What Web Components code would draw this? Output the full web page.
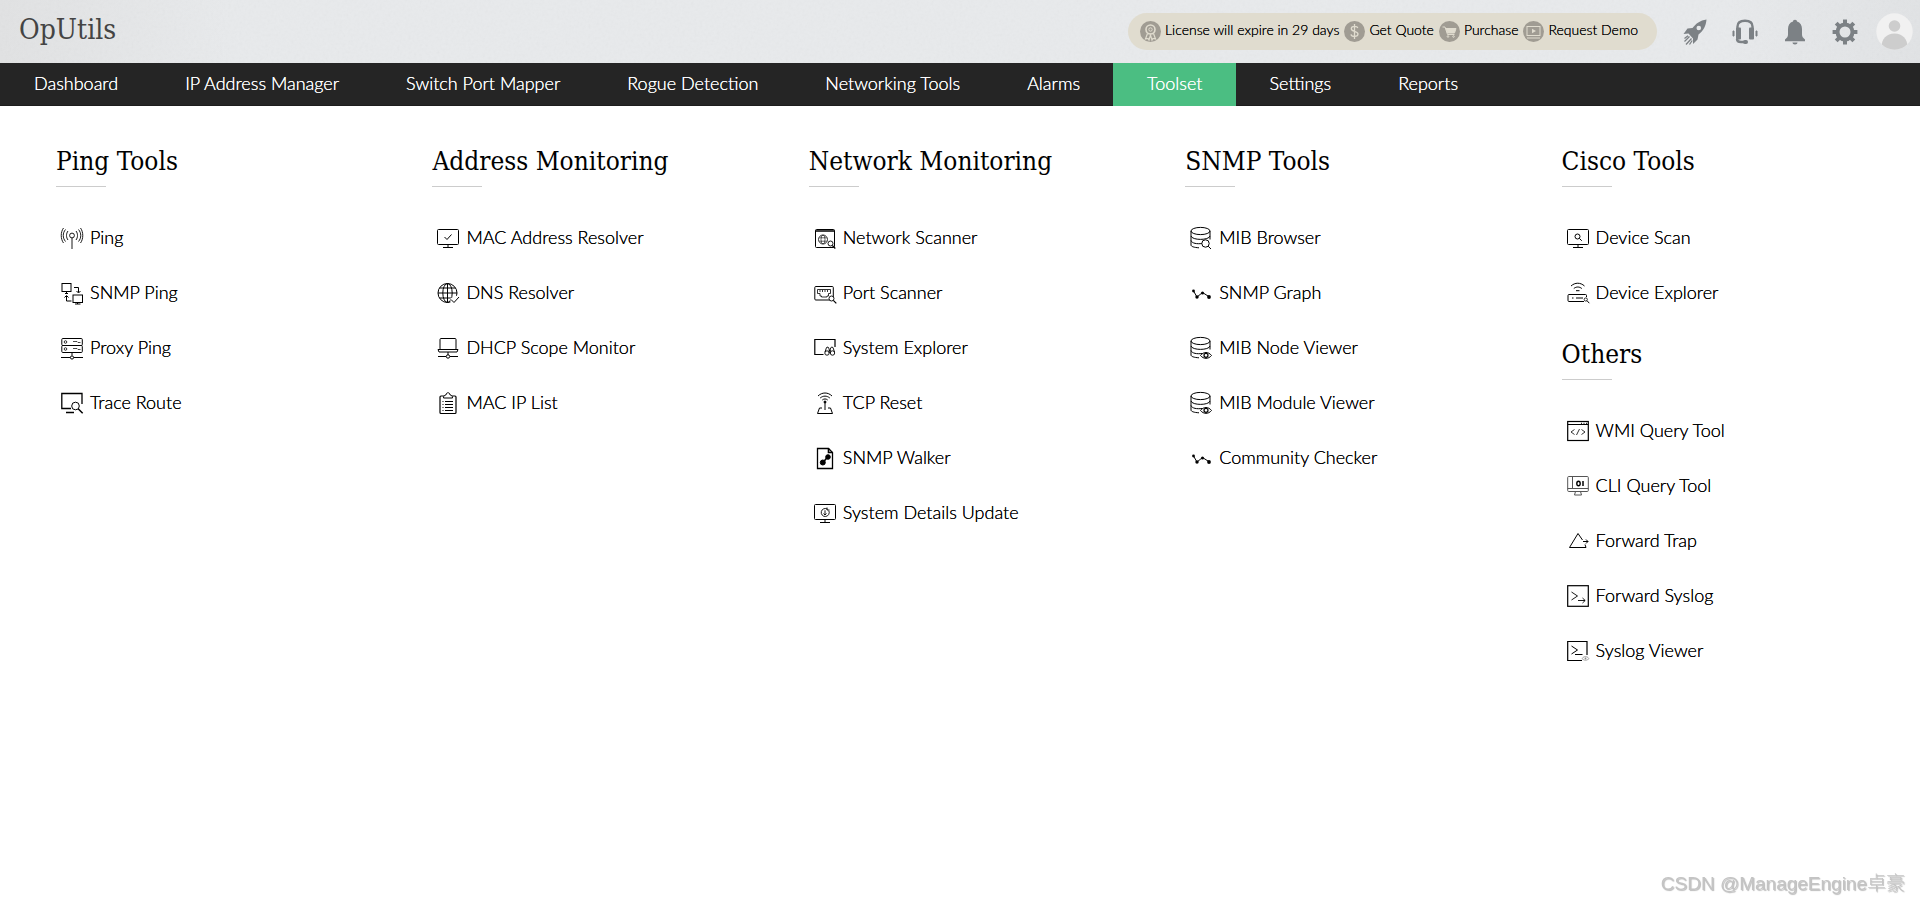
<!DOCTYPE html>
<html lang="en">
<head>
<meta charset="utf-8">
<title>OpUtils - Toolset</title>
<style>
  html, body { margin: 0; min-height: 100%; background: #fff; }
  body { font-family: Lato, "Noto Sans CJK SC", sans-serif; font-size: 18px; font-weight: 300; color: #000; }
</style>
</head>
<body>
<op-app></op-app>

<template id="app-template">
  <style>
    :host { display: block; min-height: 100vh; }
    main {
      display: grid;
      grid-template-columns: repeat(5, minmax(0, 1fr));
      column-gap: 74px;
      padding: 39px 56px;
      align-items: start;
    }
    .column { display: flex; flex-direction: column; gap: 18px; }
  </style>
  <op-header></op-header>
  <op-nav></op-nav>
  <main>
    <div class="column">
      <op-section heading="Ping Tools">
        <op-tool icon="ping">Ping</op-tool>
        <op-tool icon="snmpPing">SNMP Ping</op-tool>
        <op-tool icon="proxy">Proxy Ping</op-tool>
        <op-tool icon="trace">Trace Route</op-tool>
      </op-section>
    </div>
    <div class="column">
      <op-section heading="Address Monitoring">
        <op-tool icon="macResolver">MAC Address Resolver</op-tool>
        <op-tool icon="dns">DNS Resolver</op-tool>
        <op-tool icon="dhcp">DHCP Scope Monitor</op-tool>
        <op-tool icon="list">MAC IP List</op-tool>
      </op-section>
    </div>
    <div class="column">
      <op-section heading="Network Monitoring">
        <op-tool icon="netScan">Network Scanner</op-tool>
        <op-tool icon="portScan">Port Scanner</op-tool>
        <op-tool icon="explorer">System Explorer</op-tool>
        <op-tool icon="tcp">TCP Reset</op-tool>
        <op-tool icon="walker">SNMP Walker</op-tool>
        <op-tool icon="details">System Details Update</op-tool>
      </op-section>
    </div>
    <div class="column">
      <op-section heading="SNMP Tools">
        <op-tool icon="mib">MIB Browser</op-tool>
        <op-tool icon="graph">SNMP Graph</op-tool>
        <op-tool icon="mibView">MIB Node Viewer</op-tool>
        <op-tool icon="mibView">MIB Module Viewer</op-tool>
        <op-tool icon="graph">Community Checker</op-tool>
      </op-section>
    </div>
    <div class="column">
      <op-section heading="Cisco Tools">
        <op-tool icon="devScan">Device Scan</op-tool>
        <op-tool icon="devExplore">Device Explorer</op-tool>
      </op-section>
      <op-section heading="Others">
        <op-tool icon="wmi">WMI Query Tool</op-tool>
        <op-tool icon="cli">CLI Query Tool</op-tool>
        <op-tool icon="trap">Forward Trap</op-tool>
        <op-tool icon="syslog">Forward Syslog</op-tool>
        <op-tool icon="viewer">Syslog Viewer</op-tool>
      </op-section>
    </div>
  </main>
  <op-watermark>CSDN @ManageEngine卓豪</op-watermark>
</template>

<template id="header-template">
  <style>
    :host {
      display: flex; align-items: center; height: 63px; box-sizing: border-box;
      padding: 0 7px 0 19px; position: relative;
      background: linear-gradient(90deg, #e1e2e3, #e8eaec 12%, #e8eaec 90%, #e1e3e5);
    }
    .grain { position: absolute; inset: 0; width: 100%; height: 100%; opacity: .06; }
    .brand, .license, .icons { position: relative; }
    .brand {
      font: 28px/36px "Roboto Slab", "DejaVu Serif Condensed", "DejaVu Serif", serif;
      font-weight: 100; color: #444; text-decoration: none; margin: 0 auto 4px 0;
    }
    .license {
      display: flex; align-items: center; gap: 5px; height: 37px; box-sizing: border-box;
      padding: 0 19px 0 12px; border-radius: 19px; background: #e0dccf;
      font-size: 14px; line-height: 20px; margin-right: 25px;
    }
    .icons { display: flex; align-items: center; }
    button { border: 0; background: none; padding: 0; display: block; width: 26px; height: 26px; margin-right: 24px; }
    button.last { margin-right: 18px; }
    button.avatar { width: 37px; height: 37px; margin: 0; }
    svg { display: block; }
  </style>
  <svg class="grain" aria-hidden="true"><filter id="n"><feTurbulence type="fractalNoise" baseFrequency=".35" numOctaves="2"/><feColorMatrix type="saturate" values="0"/></filter><rect width="100%" height="100%" filter="url(#n)"/></svg>
  <a class="brand" href="#">OpUtils</a>
  <div class="license">
    <op-offer icon="badge">License will expire in 29 days</op-offer>
    <op-offer icon="dollar">Get Quote</op-offer>
    <op-offer icon="cart">Purchase</op-offer>
    <op-offer icon="demo">Request Demo</op-offer>
  </div>
  <div class="icons">
    <button aria-label="Quick start"><svg width="26" height="26" viewBox="0 0 26 26" fill="#7c8185"><path d="M24.500 0.500C18 1.500 14 4.500 10.500 9L5.500 9.500 1.500 15 6.500 14.500 11 19.500 11 25 15.500 20.500 16.500 15.500C21.500 11.500 24 7 24.500.5z"/><circle cx="16.800" cy="9" r="2.300" fill="#e5e7e9"/><path d="M7.500 17.500l-5 5M9.500 19.500l-5.500 6M6 16.800l-3.500 2.800M10.200 21.500l-2.700 4" stroke="#7c8185" stroke-width="1.300"/></svg></button>
    <button aria-label="Support"><svg width="26" height="26" viewBox="0 0 26 26" fill="#7c8185"><path d="M5.500 10V7.500C5.500 3.500 8.500 1.700 13 1.700S20.500 3.500 20.500 7.500V10M5 20c0 2 1 3 4 3h3" fill="none" stroke="#7c8185" stroke-width="2.400"/><rect x="4" y="8.500" width="5" height="12" rx="1"/><rect x="17" y="8.500" width="5" height="12" rx="1"/><path d="M1 12h1v5H1zM24 12h1v5h-1z" stroke="#7c8185"/><rect x="11" y="21" width="5" height="4" rx="1.900"/></svg></button>
    <button aria-label="Notifications"><svg width="26" height="26" viewBox="0 0 26 26" fill="#7c8185"><path d="M13 .8c1.300 0 2 .8 2 1.700 3.400 1 5 3.800 5 7.500v5.500c0 2.500 1 3.300 3 5v1.700H3v-1.700c2-1.700 3-2.500 3-5V10c0-3.700 1.600-6.500 5-7.500 0-.9.700-1.700 2-1.700zM10.500 23.500h5c0 1.300-1 2-2.500 2s-2.500-.7-2.500-2z"/></svg></button>
    <button class="last" aria-label="Settings"><svg width="26" height="26" viewBox="0 0 26 26" fill="none" stroke="#7c8185"><circle cx="13" cy="13" r="7.500" stroke-width="4"/><path d="M13 .6v4M13 21.400v4M.6 13h4M21.400 13h4M4.200 4.200l3 3M18.800 18.800l3 3M4.200 21.800l3-3M18.800 7.200l3-3" stroke-width="4"/></svg></button>
    <button class="avatar" aria-label="Account"><svg width="37" height="37" viewBox="0 0 37 37"><clipPath id="c"><circle cx="18.500" cy="18.500" r="18.200"/></clipPath><g clip-path="url(#c)"><path d="M0 0h37v37H0z" fill="#f1f1f1"/><circle cx="18.500" cy="13" r="5.800" fill="#cdcdcd"/><path d="M5.500 34c0-8 5-13.500 13-13.500s13 5.500 13 13.500L27 37H10z" fill="#cdcdcd"/></g></svg></button>
  </div>
</template>

<template id="nav-template">
  <style>
    :host { display: block; background: #252525; border-bottom: 1px solid #1d1d1d; height: 42px; }
    nav { display: flex; height: 43px; }
    a { padding: 0 33px 0 34px; line-height: 41px; color: #fff; text-decoration: none; white-space: nowrap; text-shadow: 0 0 currentColor; }
    a[aria-current] { background: #4bbe82; }
  </style>
  <nav>
    <a href="#">Dashboard</a><a href="#">IP Address Manager</a><a href="#">Switch Port Mapper</a><a href="#">Rogue Detection</a><a href="#">Networking Tools</a><a href="#">Alarms</a><a href="#" aria-current="page">Toolset</a><a href="#">Settings</a><a href="#">Reports</a>
  </nav>
</template>

<script>
  const mag = (x, y, r, d) => `<circle cx="${x}" cy="${y}" r="${r}" fill="#fff"/><path d="M${x + r * .7} ${y + r * .7}l${d} ${d}" stroke-width="1.5"/>`;
  const monitor = '<rect x=".5" y="2.500" width="21" height="15" rx="1"/><path d="M11 17.500v3M6 20.500h10"/>';
  const disks = '<ellipse cx="10.500" cy="4" rx="9.500" ry="3.600"/><path d="M1 4V18c0 1.500 3 2.500 8 2.800M20 4V12.500M1 9c1 4.500 18 4.500 19 0M1 13.500c1 3 6 3.600 11 3"/>';
  const eye = '<path d="M10.500 18.500c3-4 8-4 11 0-3 3.800-8 3.800-11 0z" fill="#fff"/><circle cx="16" cy="18.300" r="2" stroke-width="1.200"/>';
  const TOOL_ICONS = {
    ping: '<g stroke-width=".9"><circle cx="11" cy="8.500" r="2.400"/><path d="M11 11V22M7 4c-2 2.500-2 6.500 0 9M4.500 2.500c-3 3.500-3 8.500 0 12M2.500 1c-3 4-3 11 0 15M15 4c2 2.500 2 6.500 0 9M17.500 2.500c3 3.500 3 8.500 0 12M19.500 1c3 4 3 11 0 15"/></g>',
    snmpPing: '<rect x="1" y="1.500" width="9" height="8"/><path d="M5.500 9.500v2M4 11.500h3M13 5.500h4.500v5M15.500 9l2 2 2-2M10.500 19H5.500v-5M3.500 15.500l2-2 2 2M16.500 20.500v1.500M14 22h5.500"/><rect x="12" y="13" width="9.500" height="7.500"/>',
    proxy: '<rect x=".8" y="1.500" width="20.500" height="7" rx="1"/><rect x=".8" y="8.500" width="20.500" height="7" rx="1"/><circle cx="4.500" cy="5" r="1.300" stroke-width=".8"/><circle cx="4.500" cy="12" r="1.300" stroke-width=".8"/><path d="M12 4.500h4l1 1h2.500M12 11.500h4l1 1h2.500" stroke-width=".7"/><path d="M11 15.500v3M0 20.500h9.300M12.700 20.500H22"/><circle cx="11" cy="20.500" r="1.600"/>',
    trace: '<path d="M21 12V1.500H.8v15H10M5 20.500h8" stroke-width="1.300"/>' + mag(14.5, 14, 3.8, 4.5),
    macResolver: monitor + '<path d="M7.500 10l2.500 2.500 4.500-5"/>',
    dns: '<circle cx="10.500" cy="11" r="9.500"/><ellipse cx="10.500" cy="11" rx="4.700" ry="9.500"/><path d="M10.500 1.500v19M1 11h19M2.500 6h16M2.500 16h16"/><path d="M13.500 22v-6l8-3v9z" fill="#fff" stroke="none"/><path d="M14 17.500l3 3 5-5.500"/>',
    dhcp: '<rect x="3" y="1.500" width="16" height="11" rx="1"/><path d="M1 12.500h20l-1 2.500H2zM11 15v3M1 19.500h8M13 19.500h8"/><circle cx="11" cy="19.500" r="1.700"/>',
    list: '<rect x="3" y="4" width="16" height="17.500" rx="1" stroke-width="1.200"/><path d="M6.500 6c0-2.500 1.500-3 2.500-3 0-3 4-3 4 0 1 0 2.500.5 2.500 3z" fill="#fff"/><path d="M5.500 9.500h1M8 9.500h8M5.500 12.500h1M8 12.500h8M5.500 15.500h1M8 15.500h8M5.500 18.500h1M8 18.500h8"/>',
    netScan: '<rect x="1.500" y="2.500" width="19" height="18" rx="1"/><path d="M1.500 4h19" stroke-width="1.500"/><g stroke-width=".6"><circle cx="9" cy="12.500" r="4.500" stroke-width=".8"/><ellipse cx="9" cy="12.500" rx="2" ry="4.500"/><path d="M5.300 10.800h7.400M5.300 14.200h7.400"/></g><circle cx="16.500" cy="16.500" r="2.500" fill="#fff" stroke-width=".9"/><path d="M18.300 18.500l3 3" stroke-width="1.200"/>',
    portScan: '<rect x=".8" y="4.500" width="18.500" height="13.500" rx="1"/><path d="M3.500 7.500h13v4h-2v2.500H13V15H7.500v-1H6v-2.500H3.500zM6 8v2M8.500 8v2M11 8v2M13.500 8v2" stroke-width=".8"/><circle cx="17.500" cy="16.500" r="2.500" fill="#fff" stroke-width=".9"/><path d="M19.300 18.300l3 3" stroke-width="1.200"/>',
    explorer: '<path d="M21 10V2.500H.8V17.500H9.500" stroke-width="1.200"/><g stroke-width=".9"><circle cx="13" cy="16" r="2.200"/><circle cx="18.500" cy="16" r="2.200"/><path d="M11 15l1.500-4.500 1.500-.5 1.200 2v4M20.500 15L19 10.500l-1.500-.5-1.300 2v4M15 13.500h1.500"/></g>',
    tcp: '<path d="M4 4c4-4 10-4 14 0M6.200 6c3-2.500 6.600-2.500 9.600 0M8.300 8c1.700-1.400 3.700-1.400 5.400 0M11 10v8M8 16H5.500L3.500 21.500h15L16.500 16H14"/><circle cx="11" cy="10" r="1" fill="#000"/>',
    walker: '<path d="M3.500 1.500h11l4 4V21.500h-15z" stroke-width="1.300"/><path d="M14.500 1.500v4h4M9 15.500l5-6" stroke-width="1.600"/><circle cx="8.800" cy="15.500" r="2.500" fill="#000"/><circle cx="14" cy="10" r="2.300" fill="#000"/>',
    details: monitor + '<g stroke-width=".9"><path d="M13.500 7.200a4 4 0 1 0 1.300 1.500M13 5.500v2.500h2.500M11 8.300v4.500M9.500 11.500l1.500 1.500 1.500-1.500"/></g>',
    mib: disks + '<circle cx="15.500" cy="16.500" r="3.700" fill="#fff"/><path d="M18.200 19.200l2.800 2.800"/>',
    mibView: disks + eye,
    graph: '<path d="M3.500 9l3.500 6 5.500-4.500 7 4.500"/><g fill="#000" stroke="none"><circle cx="3.500" cy="9" r="1.400"/><circle cx="7" cy="15" r="1.700"/><circle cx="12.500" cy="11" r="1.500"/><circle cx="19" cy="15" r="1.900"/></g>',
    devScan: monitor + '<circle cx="10.500" cy="9.500" r="2.500"/><path d="M12.300 11.300l2.500 2.500"/>',
    devExplore: '<path d="M4 4c4-3.700 9.500-3.700 13.500 0M6.800 6.500c2.500-2 5.500-2 8 0M9 8.700h3.500M19.500 15v-1.500q0-1-1-1H2q-1 0-1 1v5q0 1 1 1H17M5 16h1.500M9 16h7"/><circle cx="18.800" cy="17.500" r="1.600" stroke-width=".8"/><path d="M20 18.700l2.300 2.500"/>',
    wmi: '<rect x=".7" y="1.500" width="20.600" height="19" stroke-width="1.200"/><path d="M.7 4.500h20.600M14 3.300h1M16.500 3.300h1M19 3.300h1"/><path d="M7.500 9.500L4 12l3.500 2.500M14.500 9.500L18 12l-3.500 2.500M12.500 9l-3 6" stroke-width=".8"/>',
    cli: '<g stroke="#555"><rect x=".7" y="1.500" width="20.600" height="15" rx="1"/><path d="M5.500 1.500v12M.7 13.500h20.600M8.500 16.500L7.500 20h7l-1-3.500"/></g><ellipse cx="11.500" cy="8.500" rx="1.700" ry="2.200" stroke-width="1.400"/><path d="M16 6v5" stroke-width="1.500"/>',
    trap: '<path d="M18 14.500l1 3H2.500L11 3.500l4.500 6.500M16 11.500h5M19 9.500l2 2-2 2"/>',
    syslog: '<rect x=".7" y=".7" width="20.600" height="20.600" stroke-width="1.200"/><path d="M4.500 7l6 4-6 4M11 15.500h7M15.500 13l2.700 2.500-2.700 2.500" stroke-width=".9"/>',
    viewer: '<path d="M20 15V1.500H.7v19H15" stroke-width="1.200"/><path d="M4.500 6l6 4-6 4M8 14.500h7.500"/><path d="M15 18.500c2-2.500 5-2.500 7 0-2 2.300-5 2.300-7 0z" stroke="#888" stroke-width=".8"/><circle cx="18.500" cy="18.500" r=".9" fill="#888" stroke="none"/>'
  };
  const OFFER_ICONS = {
    badge: '<circle cx="10.500" cy="8.500" r="4.500" stroke-width="1.600"/><circle cx="10.500" cy="8.500" r="1.700"/><path d="M7.500 12.500l-2 5.500 2.500-.5 1 1.500 1.500-5 1.500 5 1-1.500 2.500.5-2-5.500" stroke-width="1.200"/>',
    dollar: '<path d="M13.800 7c-.5-2-6.500-2.300-6.500.7 0 3.300 6.700 2 6.700 5.300 0 3.200-6.500 3-7 .3M10.500 3v15" stroke-width="1.300"/>',
    cart: '<path d="M3.500 6H6l2.500 7.500h7"/><path d="M7 7.500h10l-1.500 4.500H8.500z" fill="#e0dccf"/><circle cx="9" cy="15.500" r=".8"/><circle cx="14.500" cy="15.500" r=".8"/>',
    demo: '<rect x="4" y="5.500" width="13" height="9"/><path d="M4 17h13"/><path d="M9 7.800l4 2.200-4 2.200z" fill="#e0dccf" stroke="none"/>'
  };

  function fromTemplate(id) {
    return class extends HTMLElement {
      constructor() {
        super();
        this.attachShadow({ mode: 'open' }).append(document.getElementById(id).content.cloneNode(true));
      }
    };
  }

  customElements.define('op-tool', class extends HTMLElement {
    connectedCallback() {
      if (this.shadowRoot) return;
      this.attachShadow({ mode: 'open' }).innerHTML = `
        <style>
          :host { display: block; }
          a { display: flex; align-items: center; gap: 7px; height: 55px; padding-left: 5px; color: inherit; text-decoration: none; white-space: nowrap; }
          span { padding-bottom: 2px; text-shadow: 0 0 currentColor; }
          svg { flex: none; overflow: visible; }
        </style>
        <a href="#"><svg width="22" height="22" viewBox="0 0 22 22" fill="none" stroke="#000" aria-hidden="true">${TOOL_ICONS[this.getAttribute('icon')]}</svg><span><slot></slot></span></a>`;
    }
  });

  customElements.define('op-offer', class extends HTMLElement {
    connectedCallback() {
      if (this.shadowRoot) return;
      this.attachShadow({ mode: 'open' }).innerHTML = `
        <style>
          :host { display: block; }
          a { display: flex; align-items: center; gap: 4px; color: inherit; text-decoration: none; white-space: nowrap; }
          span { padding-bottom: 3px; text-shadow: 0 0 currentColor; }
        </style>
        <a href="#"><svg width="21" height="21" viewBox="0 0 21 21" fill="none" stroke="#e0dccf" aria-hidden="true"><circle cx="10.500" cy="10.500" r="10.500" fill="#a09c93" stroke="none"/>${OFFER_ICONS[this.getAttribute('icon')]}</svg><span><slot></slot></span></a>`;
    }
  });

  customElements.define('op-section', class extends HTMLElement {
    connectedCallback() {
      if (this.shadowRoot) return;
      this.attachShadow({ mode: 'open' }).innerHTML = `
        <style>
          :host { display: block; }
          h2 { margin: 0; font: 400 26px/32px "Roboto Slab", "DejaVu Serif Condensed", "DejaVu Serif", serif; white-space: nowrap; }
          hr { width: 50px; height: 1px; border: 0; background: #ccc; margin: 9px 0 23px; }
        </style>
        <h2></h2><hr><slot></slot>`;
      this.shadowRoot.querySelector('h2').textContent = this.getAttribute('heading');
    }
  });

  customElements.define('op-watermark', class extends HTMLElement {
    connectedCallback() {
      if (this.shadowRoot) return;
      this.attachShadow({ mode: 'open' }).innerHTML = `
        <style>
          :host { display: block; position: fixed; right: 15px; bottom: 6px; font: 300 19px/28px "Liberation Sans", "Noto Sans CJK SC", sans-serif; color: #c4c4c4; text-shadow: 1px 1px 1px #bbb; white-space: nowrap; }
        </style><slot></slot>`;
    }
  });

  customElements.define('op-header', fromTemplate('header-template'));
  customElements.define('op-nav', fromTemplate('nav-template'));
  customElements.define('op-app', fromTemplate('app-template'));
</script>
</body>
</html>
